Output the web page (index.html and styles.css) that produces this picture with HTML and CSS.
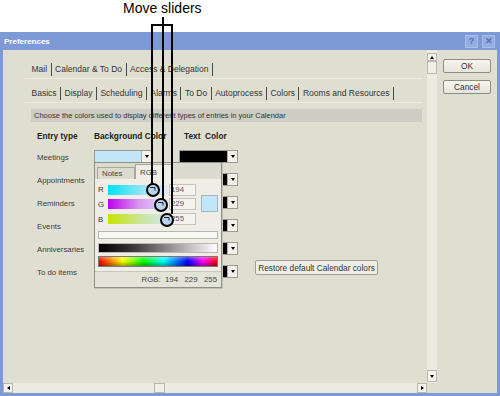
FILE: index.html
```html
<!DOCTYPE html>
<html>
	<head>
		<meta charset="UTF-8">
		<title>Preferences</title>
		<link rel="stylesheet" href="styles.css">
	</head>
	<body>
		<div class="caption">Move sliders</div>
		<div class="window">
			<div class="titlebar">
				<span class="title">Preferences</span>
				<span class="tbb">?</span>
				<span class="tbb">✕</span>
			</div>
			<div class="frame">
				<div class="pane">
					<div class="pane-top">
						<div class="content">
							<div class="tabrow">
								<span>Mail</span><span>Calendar &amp; To Do</span><span>Access &amp; Delegation</span>
							</div>
							<div class="tabrow">
								<span>Basics</span><span>Display</span><span>Scheduling</span><span>Alarms</span><span>To Do</span><span>Autoprocess</span><span class="on">Colors</span><span>Rooms and Resources</span>
							</div>
							<div class="hint">Choose the colors used to display different types of entries in your Calendar</div>
							<div class="colors">
								<div class="head">Entry type</div>
								<div class="head">Background Color</div>
								<div class="head text">Text&nbsp; Color</div>

								<div class="label">Meetings</div>
								<div class="cell">
									<div class="drop bg"><i></i><b></b></div>
									<div class="popup">
										<div class="ptabs"><span class="ptab">Notes</span><span class="ptab act">RGB</span></div>
										<div class="prow">
											<span class="ch">R</span><span class="slide sr"></span><span class="val">194</span>
										</div>
										<div class="pmid">
											<div>
												<div class="prow">
													<span class="ch">G</span><span class="slide sg"></span><span class="val">229</span>
												</div>
												<div class="prow">
													<span class="ch">B</span><span class="slide sb"></span><span class="val">255</span>
												</div>
											</div>
											<span class="swatch"></span>
										</div>
										<div class="strip blank"></div>
										<div class="strip grays"></div>
										<div class="strip rainbow"></div>
										<div class="pstatus">RGB:&nbsp; 194&nbsp;&nbsp; 229&nbsp;&nbsp; 255</div>
									</div>
								</div>
								<div class="cell"><div class="drop fg"><i></i><b></b></div></div>

								<div class="label">Appointments</div>
								<div class="cell"><div class="drop bg"><i></i><b></b></div></div>
								<div class="cell"><div class="drop fg"><i></i><b></b></div></div>

								<div class="label">Reminders</div>
								<div class="cell"><div class="drop bg"><i></i><b></b></div></div>
								<div class="cell"><div class="drop fg"><i></i><b></b></div></div>

								<div class="label">Events</div>
								<div class="cell"><div class="drop bg"><i></i><b></b></div></div>
								<div class="cell"><div class="drop fg"><i></i><b></b></div></div>

								<div class="label">Anniversaries</div>
								<div class="cell"><div class="drop bg"><i></i><b></b></div></div>
								<div class="cell"><div class="drop fg"><i></i><b></b></div></div>

								<div class="label">To do items</div>
								<div class="cell"><div class="drop bg"><i></i><b></b></div></div>
								<div class="cell"><div class="drop fg"><i></i><b></b></div><button class="restore">Restore default Calendar colors</button></div>
							</div>
						</div>
						<div class="vscroll">
							<span class="sbtn up"></span>
							<span class="sthumb"></span>
							<span class="strack"></span>
							<span class="sbtn down"></span>
						</div>
					</div>
					<div class="hscroll">
						<span class="sbtn left"></span>
						<span class="htrack"></span>
						<span class="sthumb"></span>
						<span class="htrack wide"></span>
						<span class="sbtn right"></span>
					</div>
				</div>
				<div class="side">
					<button class="btn">OK</button>
					<button class="btn">Cancel</button>
				</div>
			</div>
		</div>
		<svg class="marks" width="500" height="396" viewBox="0 0 500 396">
			<g fill="none" stroke="#000" stroke-width="2">
				<path d="M163 17V199"/>
				<path d="M152 184V25H172V214"/>
			</g>
			<g stroke="#000" stroke-width="2" fill="#b9d3ee">
				<circle cx="153" cy="190" r="6"/>
				<circle cx="161" cy="205" r="6"/>
				<circle cx="167" cy="220" r="6"/>
			</g>
			<g fill="none" stroke="#222" stroke-width="1">
				<path d="M150 187.5h5v3"/>
				<path d="M158 202.5h5v3"/>
				<path d="M164 217.5h5v3"/>
			</g>
		</svg>
	</body>
</html>
```
FILE: styles.css
```css
body {
	margin: 0;
	width: 500px;
	height: 396px;
	background: #fff;
	position: relative;
	overflow: hidden;
	font-family: "Liberation Sans", Arial, sans-serif;
	color: #2b2b2b;
}

.caption {
	height: 32px;
	padding-left: 123px;
	font-size: 14px;
	line-height: 16px;
	color: #000;
}

.window {
	height: 364px;
	background: #7d99d6;
	display: flex;
	flex-direction: column;
}

.titlebar {
	height: 18px;
	display: flex;
	align-items: center;
	padding: 0 5px 0 4px;
	gap: 4px;
}

.title {
	flex: 1;
	color: #fff;
	font-size: 8px;
	font-weight: bold;
}

.tbb {
	width: 11px;
	height: 11px;
	background: #94ade2;
	border: 1px solid #a9bde9;
	color: #5a70b4;
	font-size: 9px;
	line-height: 11px;
	text-align: center;
	font-weight: bold;
}

.frame {
	flex: 1;
	display: flex;
	margin: 0 3px 3px 3px;
	background: #dfdfd1;
}

.pane {
	width: 434px;
	display: flex;
	flex-direction: column;
}

.pane-top {
	flex: 1;
	display: flex;
}

.content {
	width: 424px;
	font-size: 7.8px;
}

/* tabs */
.tabrow {
	height: 17px;
	margin: 11px 5px 0 22px;
	padding-left: 3px;
	display: flex;
	align-items: center;
	white-space: nowrap;
	border-bottom: 1px solid #ecebe1;
	font-size: 8.5px;
	color: #333;
}

.tabrow + .tabrow {
	margin-top: 6px;
}

.tabrow span {
	padding: 0 3.5px;
	line-height: 13px;
	border-right: 1px solid #4a4a4a;
}

.hint {
	margin: 6px 5px 0 28px;
	height: 13px;
	line-height: 13px;
	padding-left: 3px;
	background: #cdcdc3;
	font-size: 7.5px;
	color: #333;
}

/* colour table */
.colors {
	margin: 7px 0 0 34px;
	display: grid;
	grid-template-columns: 57px 85px auto;
	grid-auto-rows: 23px;
	grid-template-rows: 17px;
	align-items: center;
}

.head {
	font-weight: bold;
	font-size: 8.3px;
	color: #222;
	align-self: start;
	line-height: 14px;
}

.head.text {
	padding-left: 5px;
}

.label {
	color: #3a3a3a;
}

.cell {
	position: relative;
	display: flex;
	align-items: center;
}

.drop {
	height: 11px;
	border: 1px solid #9a9a90;
	display: flex;
	margin-bottom: 2px;
}

.drop i {
	flex: 1;
}

.drop b {
	width: 9px;
	background: #f2f1ea;
	border-left: 1px solid #b0b0a4;
	display: flex;
	align-items: center;
	justify-content: center;
}

.drop b::after {
	content: "";
	border-left: 2px solid transparent;
	border-right: 2px solid transparent;
	border-top: 3px solid #000;
}

.drop.bg {
	width: 56px;
}

.drop.bg i {
	background: #c2e5f8;
}

.drop.fg {
	width: 57px;
}

.drop.fg i {
	background: #000;
}

.restore {
	margin: 0 0 10px 17px;
	width: 123px;
	height: 15px;
	padding: 0;
	font-family: inherit;
	font-size: 8.3px;
	color: #333;
	background: #efeee6;
	border: 1px solid #a19f92;
	border-radius: 2px;
}

/* colour picker popup */
.popup {
	position: absolute;
	top: 12px;
	left: 0;
	width: 126px;
	height: 124px;
	background: #eeede6;
	border: 1px solid #8f8f86;
	box-shadow: 1px 1px 0 #c4c4b8;
	display: flex;
	flex-direction: column;
	z-index: 2;
}

.ptabs {
	height: 17px;
	background: #dcdbcf;
	display: flex;
	align-items: flex-end;
	padding-left: 2px;
	margin-bottom: 4px;
}

.ptab {
	width: 38px;
	height: 12px;
	line-height: 12px;
	padding-left: 4px;
	box-sizing: border-box;
	border: 1px solid #a8a89c;
	border-bottom: none;
	color: #444;
}

.ptab.act {
	height: 15px;
	line-height: 15px;
	background: #eeede6;
}

.prow {
	height: 15px;
	display: flex;
	align-items: center;
	padding-left: 3px;
}

.ch {
	width: 10px;
	color: #333;
}

.slide {
	width: 60px;
	height: 10px;
}

.sr {
	background: linear-gradient(to right, #00e2f2, #9ee4fb 60%, #e6e7fb);
}

.sg {
	background: linear-gradient(to right, #c000ee, #d792f2 50%, #e0e6f8);
}

.sb {
	background: linear-gradient(to right, #c6e400, #cae5a8 60%, #d7e8f4);
}

.val {
	margin-left: 1px;
	border: 1px solid #c4c3b8;
	background: #f4f3ee;
	padding-left: 1px;
	box-sizing: border-box;
	width: 27px;
	height: 12px;
	line-height: 10px;
	color: #555;
}

.pmid {
	display: flex;
	align-items: flex-start;
}

.swatch {
	width: 15px;
	height: 15px;
	margin: -2px 0 0 5px;
	background: #c2e5f8;
	border: 1px solid #a8b4be;
}

.strip {
	height: 7px;
	margin: 0 3px 0 3px;
	border: 1px solid #b8b7ab;
}

.blank {
	margin-top: 4px;
	background: #f8f8f4;
}

.grays {
	margin-top: 4px;
	height: 8px;
	background: linear-gradient(to right, #000, #3a3a3a 30%, #a0a0a0 65%, #fff);
}

.rainbow {
	margin-top: 3px;
	height: 10px;
	border-color: #777;
	background:
		linear-gradient(to bottom, rgba(255, 255, 255, .35), rgba(0, 0, 0, 0) 45%, rgba(0, 0, 0, .35)),
		linear-gradient(to right, #f00, #ff0 20%, #0f0 38%, #0ff 55%, #00f 75%, #f0f 88%, #f00);
}

.pstatus {
	margin-top: 4px;
	flex: 1;
	border-top: 1px solid #c8c7bb;
	background: #e4e3d8;
	text-align: right;
	padding-right: 4px;
	line-height: 15px;
	color: #444;
}

/* scroll bars */
.vscroll {
	width: 10px;
	padding-top: 3px;
	display: flex;
	flex-direction: column;
	background: #ebebe2;
}

.sbtn {
	display: flex;
	align-items: center;
	justify-content: center;
	box-sizing: border-box;
	border: 1px solid #b9b8ac;
	background: #f3f2ec;
}

.sbtn.up {
	height: 8px;
}

.sbtn.down {
	height: 12px;
	margin-bottom: 1px;
}

.sbtn.up::after {
	content: "";
	border-left: 2px solid transparent;
	border-right: 2px solid transparent;
	border-bottom: 3px solid #000;
}

.sbtn.down::after {
	content: "";
	border-left: 2px solid transparent;
	border-right: 2px solid transparent;
	border-top: 3px solid #000;
}

.vscroll .sthumb {
	height: 13px;
	box-sizing: border-box;
	border: 1px solid #b9b8ac;
	background: #f0efe8;
}

.strack {
	flex: 1;
}

.hscroll {
	height: 10px;
	width: 424px;
	display: flex;
	background: #ebebe2;
}

.hscroll .sbtn {
	width: 10px;
}

.sbtn.left::after {
	content: "";
	border-top: 2px solid transparent;
	border-bottom: 2px solid transparent;
	border-right: 3px solid #000;
}

.sbtn.right::after {
	content: "";
	border-top: 2px solid transparent;
	border-bottom: 2px solid transparent;
	border-left: 3px solid #000;
}

.htrack {
	width: 141px;
}

.htrack.wide {
	width: auto;
	flex: 1;
}

.hscroll .sthumb {
	width: 11px;
	box-sizing: border-box;
	border: 1px solid #b9b8ac;
	background: #f0efe8;
}

.side {
	flex: 1;
	display: flex;
	flex-direction: column;
	align-items: flex-start;
	padding: 9px 0 0 6px;
	gap: 7px;
}

.btn {
	width: 48px;
	height: 14px;
	padding: 0;
	font-family: inherit;
	font-size: 8.3px;
	color: #333;
	background: linear-gradient(#f6f5ef, #e6e5dc);
	border: 1px solid #8e8d82;
	border-radius: 2px;
}

.marks {
	position: absolute;
	top: 0;
	left: 0;
	pointer-events: none;
	z-index: 5;
}
```
